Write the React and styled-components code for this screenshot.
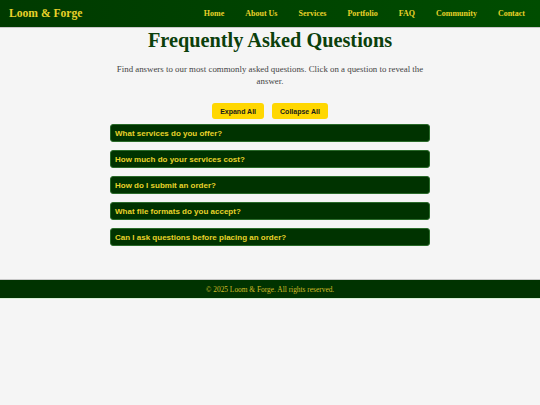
import styled, { createGlobalStyle } from "styled-components"
import { useState } from "react"

const GlobalStyle = createGlobalStyle`
  html, body {
    margin: 0;
    padding: 0;
    background: #f5f5f5;
    font-family: Georgia, "Liberation Serif", serif;
  }
`

const Header = styled.header`
  display: flex;
  justify-content: space-between;
  align-items: center;
  height: 28px;
  padding: 0 15px 0 9px;
  background: linear-gradient(90deg, #003a00, #004d00);
  border-bottom: 1px solid #c8c8c8;
  box-sizing: border-box;
`

const Logo = styled.div`
  color: #e8d22a;
  font-weight: bold;
  font-size: 11.6px;
`

const Nav = styled.nav`
  display: flex;
  gap: 21px;
`

const NavLink = styled.a`
  color: #e8d22a;
  font-size: 8px;
  font-weight: bold;
  text-decoration: none;
  cursor: pointer;
`

const Main = styled.main`
  width: 320px;
  margin: 0 auto;
  padding: 0 0 33px;
  display: flex;
  flex-direction: column;
  align-items: center;
`

const Title = styled.h1`
  margin: 0;
  color: #0b400b;
  font-size: 20.3px;
  line-height: 24px;
  font-weight: bold;
`

const Intro = styled.p`
  margin: 11px 0 0;
  color: #444;
  font-size: 8.85px;
  line-height: 12px;
  text-align: center;
`

const ButtonRow = styled.div`
  display: flex;
  gap: 8px;
  margin-top: 16px;
`

const Button = styled.button`
  background: #ffd700;
  border: none;
  border-radius: 3px;
  padding: 0 8px;
  height: 16px;
  font-family: "Liberation Sans", Arial, sans-serif;
  font-weight: bold;
  font-size: 7px;
  color: #1a1a1a;
  cursor: pointer;
`

const List = styled.div`
  display: flex;
  flex-direction: column;
  gap: 8px;
  width: 100%;
  margin-top: 5px;
`

const Item = styled.div`
  background: #003300;
  border: 1px solid #2a6a2a;
  border-radius: 3px;
  box-sizing: border-box;
`

const Question = styled.div`
  height: 16px;
  display: flex;
  align-items: center;
  padding: 0 4px;
  color: #e8d22a;
  font-family: "Liberation Sans", Arial, sans-serif;
  font-weight: bold;
  font-size: 8px;
  cursor: pointer;
`

const Answer = styled.div`
  padding: 4px 6px 6px;
  color: #f0f0f0;
  font-family: "Liberation Sans", Arial, sans-serif;
  font-size: 7px;
`

const Footer = styled.footer`
  height: 20px;
  display: flex;
  align-items: center;
  justify-content: center;
  background: #003300;
  border-top: 1px solid #c8c8c8;
  border-bottom: 1px solid #d8f0d8;
  color: #d0bc28;
  font-size: 7.4px;
  box-sizing: border-box;
`

const faqs = [
  { q: "What services do you offer?", a: "Custom design and fabrication." },
  { q: "How much do your services cost?", a: "Pricing depends on the project." },
  { q: "How do I submit an order?", a: "Use the contact form." },
  { q: "What file formats do you accept?", a: "SVG, PDF, DXF and more." },
  { q: "Can I ask questions before placing an order?", a: "Of course, just reach out." },
]

const links = ["Home", "About Us", "Services", "Portfolio", "FAQ", "Community", "Contact"]

export default function App() {
  const [open, setOpen] = useState([])

  const toggle = (i) =>
    setOpen(open.includes(i) ? open.filter((x) => x !== i) : [...open, i])

  return (
    <>
      <GlobalStyle />
      <Header>
        <Logo>Loom &amp; Forge</Logo>
        <Nav>
          {links.map((l) => (
            <NavLink key={l}>{l}</NavLink>
          ))}
        </Nav>
      </Header>
      <Main>
        <Title>Frequently Asked Questions</Title>
        <Intro>
          Find answers to our most commonly asked questions. Click on a question to reveal the
          answer.
        </Intro>
        <ButtonRow>
          <Button onClick={() => setOpen(faqs.map((_, i) => i))}>Expand All</Button>
          <Button onClick={() => setOpen([])}>Collapse All</Button>
        </ButtonRow>
        <List>
          {faqs.map((f, i) => (
            <Item key={f.q}>
              <Question onClick={() => toggle(i)}>{f.q}</Question>
              {open.includes(i) && <Answer>{f.a}</Answer>}
            </Item>
          ))}
        </List>
      </Main>
      <Footer>© 2025 Loom &amp; Forge. All rights reserved.</Footer>
    </>
  )
}
